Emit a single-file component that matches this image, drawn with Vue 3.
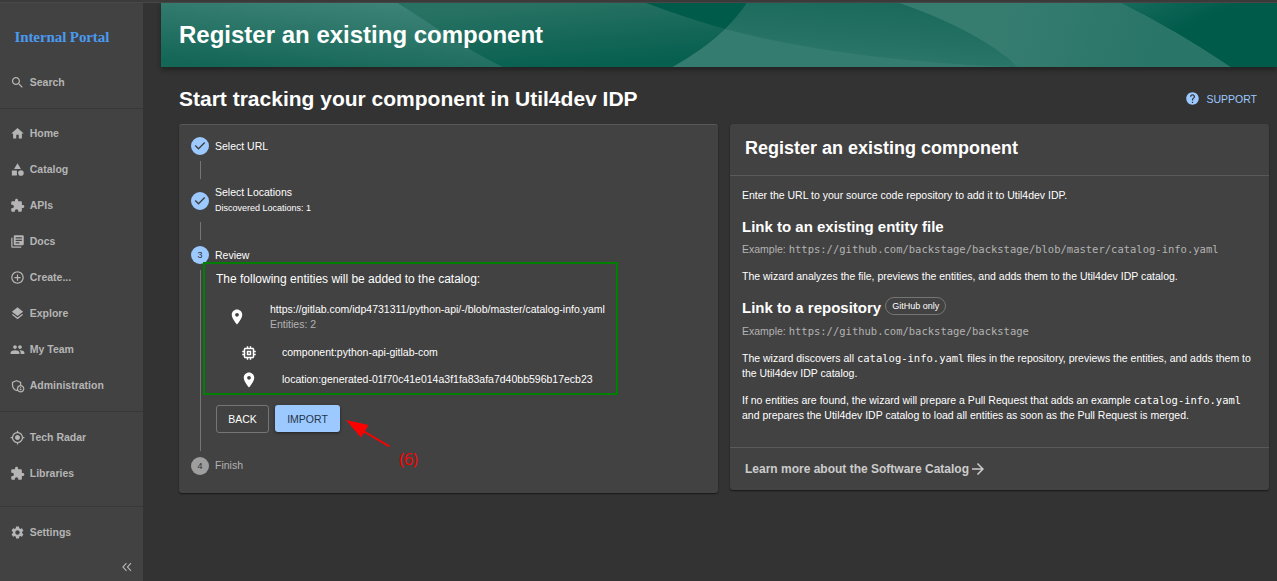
<script setup>
const icons = {
  search: 'M15.5 14h-.79l-.28-.27C15.41 12.59 16 11.11 16 9.5 16 5.91 13.09 3 9.5 3S3 5.91 3 9.5 5.91 16 9.5 16c1.61 0 3.09-.59 4.23-1.57l.27.28v.79l5 4.99L20.49 19l-4.99-5zm-6 0C7.01 14 5 11.99 5 9.5S7.01 5 9.5 5 14 7.01 14 9.5 11.99 14 9.5 14z',
  home: 'M10 20v-6h4v6h5v-8h3L12 3 2 12h3v8z',
  catalog: 'M12 2l-5.5 9h11zM17.5 13a4.5 4.5 0 1 0 0 9 4.5 4.5 0 0 0 0-9zM3 13.5h8v8H3z',
  extension: 'M20.5 11H19V7c0-1.1-.9-2-2-2h-4V3.5C13 2.12 11.88 1 10.5 1S8 2.12 8 3.5V5H4c-1.1 0-1.99.9-1.99 2v3.8H3.5c1.49 0 2.7 1.21 2.7 2.7s-1.21 2.7-2.7 2.7H2V20c0 1.1.9 2 2 2h3.8v-1.5c0-1.49 1.21-2.7 2.7-2.7 1.49 0 2.7 1.21 2.7 2.7V22H17c1.1 0 2-.9 2-2v-4h1.5c1.38 0 2.5-1.12 2.5-2.5S21.88 11 20.5 11z',
  docs: 'M4 6H2v14c0 1.1.9 2 2 2h14v-2H4V6zm16-4H8c-1.1 0-2 .9-2 2v12c0 1.1.9 2 2 2h12c1.1 0 2-.9 2-2V4c0-1.1-.9-2-2-2zm-1 9H9V9h10v2zm-4 4H9v-2h6v2zm4-8H9V5h10v2z',
  create: 'M13 7h-2v4H7v2h4v4h2v-4h4v-2h-4V7zm-1-5C6.48 2 2 6.48 2 12s4.48 10 10 10 10-4.48 10-10S17.52 2 12 2zm0 18c-4.41 0-8-3.59-8-8s3.59-8 8-8 8 3.59 8 8-3.59 8-8 8z',
  layers: 'M11.99 18.54l-7.37-5.73L3 14.07l9 7 9-7-1.63-1.27-7.38 5.74zM12 16l7.36-5.73L21 9l-9-7-9 7 1.63 1.27L12 16z',
  people: 'M16 11c1.66 0 2.99-1.34 2.99-3S17.66 5 16 5c-1.66 0-3 1.34-3 3s1.34 3 3 3zm-8 0c1.66 0 2.99-1.34 2.99-3S9.66 5 8 5C6.34 5 5 6.34 5 8s1.34 3 3 3zm0 2c-2.33 0-7 1.17-7 3.5V19h14v-2.5c0-2.33-4.67-3.5-7-3.5zm8 0c-.29 0-.62.02-.97.05 1.16.84 1.97 1.97 1.97 3.45V19h6v-2.5c0-2.33-4.67-3.5-7-3.5z',
  admin: 'M18 11.09V6.27L10.5 3 3 6.27v4.91c0 4.54 3.2 8.79 7.5 9.82.55-.13 1.08-.32 1.6-.55C13.18 21.99 14.97 23 17 23c3.31 0 6-2.69 6-6 0-2.97-2.16-5.43-5-5.91zM11 17c0 .56.08 1.11.23 1.62-.24.11-.48.22-.73.3-3.17-1-5.5-4.24-5.5-7.74v-3.6l5.5-2.4 5.5 2.4v3.51c-2.84.48-5 2.94-5 5.91zm6 4c-2.21 0-4-1.79-4-4s1.79-4 4-4 4 1.79 4 4-1.79 4-4 4zM17 14.38a1.12 1.12 0 1 0 0 2.24 1.12 1.12 0 0 0 0-2.24zM17 17.5c-.73 0-2.19.36-2.24 1.08.5.71 1.32 1.17 2.24 1.17s1.74-.46 2.24-1.17c-.05-.72-1.51-1.08-2.24-1.08z',
  radar: 'M12 8c-2.21 0-4 1.79-4 4s1.79 4 4 4 4-1.79 4-4-1.79-4-4-4zm8.94 3c-.46-4.17-3.77-7.48-7.94-7.94V1h-2v2.06C6.83 3.52 3.52 6.83 3.06 11H1v2h2.06c.46 4.17 3.77 7.48 7.94 7.94V23h2v-2.06c4.17-.46 7.48-3.77 7.94-7.94H23v-2h-2.06zM12 19c-3.87 0-7-3.13-7-7s3.13-7 7-7 7 3.13 7 7-3.13 7-7 7z',
  settings: 'M19.14 12.94c.04-.3.06-.61.06-.94 0-.32-.02-.64-.07-.94l2.03-1.58c.18-.14.23-.41.12-.61l-1.92-3.32c-.12-.22-.37-.29-.59-.22l-2.39.96c-.5-.38-1.03-.7-1.62-.94l-.36-2.54c-.04-.24-.24-.41-.48-.41h-3.84c-.24 0-.43.17-.47.41l-.36 2.54c-.59.24-1.13.57-1.62.94l-2.39-.96c-.22-.08-.47 0-.59.22L2.74 8.87c-.12.21-.08.47.12.61l2.03 1.58c-.05.3-.09.63-.09.94s.02.64.07.94l-2.03 1.58c-.18.14-.23.41-.12.61l1.92 3.32c.12.22.37.29.59.22l2.39-.96c.5.38 1.03.7 1.62.94l.36 2.54c.05.24.24.41.48.41h3.84c.24 0 .44-.17.47-.41l.36-2.54c.59-.24 1.13-.56 1.62-.94l2.39.96c.22.08.47 0 .59-.22l1.92-3.32c.12-.22.07-.47-.12-.61l-2.01-1.58zM12 15.6c-1.98 0-3.6-1.62-3.6-3.6s1.62-3.6 3.6-3.6 3.6 1.62 3.6 3.6-1.62 3.6-3.6 3.6z',
  pin: 'M12 2C8.13 2 5 5.13 5 9c0 5.25 7 13 7 13s7-7.75 7-13c0-3.87-3.13-7-7-7zm0 9.5c-1.38 0-2.5-1.12-2.5-2.5s1.12-2.5 2.5-2.5 2.5 1.12 2.5 2.5-1.12 2.5-2.5 2.5z',
  memory: 'M15 9H9v6h6V9zm-2 4h-2v-2h2v2zm8-2V9h-2V7c0-1.1-.9-2-2-2h-2V3h-2v2h-2V3H9v2H7c-1.1 0-2 .9-2 2v2H3v2h2v2H3v2h2v2c0 1.1.9 2 2 2h2v2h2v-2h2v2h2v-2h2c1.1 0 2-.9 2-2v-2h2v-2h-2v-2h2zm-4 6H7V7h10v10z',
  help: 'M12 2C6.48 2 2 6.48 2 12s4.48 10 10 10 10-4.48 10-10S17.52 2 12 2zm1 17h-2v-2h2v2zm2.07-7.75l-.9.92C13.45 12.9 13 13.5 13 15h-2v-.5c0-1.1.45-2.1 1.17-2.83l1.24-1.26c.37-.36.59-.86.59-1.41 0-1.1-.9-2-2-2s-2 .9-2 2H8c0-2.21 1.79-4 4-4s4 1.79 4 4c0 .88-.36 1.68-.93 2.25z',
  arrow: 'M12 4l-1.41 1.41L16.17 11H4v2h12.17l-5.58 5.59L12 20l8-8z',
  done: 'M12 0a12 12 0 1 0 0 24 12 12 0 0 0 0-24zm-2 17l-5-5 1.4-1.4 3.6 3.6 7.6-7.6L19 8l-9 9z',
}
const groups = [
  [['search', 'Search']],
  [
    ['home', 'Home'], ['catalog', 'Catalog'], ['extension', 'APIs'], ['docs', 'Docs'],
    ['create', 'Create...'], ['layers', 'Explore'], ['people', 'My Team'], ['admin', 'Administration'],
  ],
  [['radar', 'Tech Radar'], ['extension', 'Libraries']],
  [['settings', 'Settings']],
]
</script>

<template>
  <div class="app">
    <div class="strip"></div>
    <div class="body">
      <nav class="sidebar">
        <div class="logo">Internal Portal</div>
        <div v-for="(group, g) in groups" :key="g" :class="['group', 'group-' + g]">
          <a v-for="item in group" :key="item[1]" class="nav-item">
            <svg viewBox="0 0 24 24"><path fill-rule="evenodd" :d="icons[item[0]]" /></svg>
            <span>{{ item[1] }}</span>
          </a>
        </div>
        <div class="collapse">
          <svg viewBox="0 0 10 10"><path d="M4.500 1.200.9 5l3.600 3.800M9 1.200 5.400 5 9 8.800" /></svg>
        </div>
      </nav>

      <main>
        <header>
          <svg class="waves" viewBox="161 3 1116 64" preserveAspectRatio="none">
            <defs>
              <linearGradient id="ga" gradientUnits="userSpaceOnUse" x1="330" y1="0" x2="323" y2="75"><stop offset="0" stop-color="#3c8276" /><stop offset="1" stop-color="#146656" /></linearGradient>
              <linearGradient id="gb" gradientUnits="userSpaceOnUse" x1="560" y1="0" x2="566" y2="70"><stop offset="0" stop-color="#287263" /><stop offset="1" stop-color="#065f4f" /></linearGradient>
              <linearGradient id="gc" gradientUnits="userSpaceOnUse" x1="850" y1="3" x2="845" y2="67"><stop offset="0" stop-color="#1b6a5b" /><stop offset="1" stop-color="#2d786a" /></linearGradient>
              <linearGradient id="gd" gradientUnits="userSpaceOnUse" x1="1000" y1="20" x2="1150" y2="60"><stop offset="0" stop-color="#367d70" /><stop offset="1" stop-color="#297567" /></linearGradient>
              <linearGradient id="ge" gradientUnits="userSpaceOnUse" x1="1150" y1="-6" x2="1170" y2="36"><stop offset="0" stop-color="#15695a" /><stop offset="1" stop-color="#005b4b" /></linearGradient>
            </defs>
            <path fill="#005b4b" d="M161 3h1116v64H161z" />
            <path fill="url(#gb)" d="M380 3H646Q686 18 725 29L690 67H380z" />
            <path fill="url(#ga)" d="M161 3H397.500Q426 21 450 37T503 67H161z" />
            <path fill="#347c6f" d="M672.500 67Q706 48 725 29L900 40 1040 67z" />
            <path fill="url(#gc)" d="M725 29Q740 14 746.500 3H899Q977 30 1018 67H1010Q840 60 725 29z" />
            <path fill="url(#gd)" d="M899 3H1122Q1176 30 1231 67H1018Q977 30 899 3z" />
            <path fill="url(#ge)" d="M1122 3H1277V67H1231Q1176 30 1122 3z" />
          </svg>
          <h1>Register an existing component</h1>
        </header>

        <section class="content">
          <div class="title-row">
            <h2>Start tracking your component in Util4dev IDP</h2>
            <a class="support">
              <svg viewBox="0 0 24 24"><path :d="icons.help" /></svg>
              <span>SUPPORT</span>
            </a>
          </div>

          <div class="columns">
            <div class="card wizard">
              <div class="step">
                <svg class="badge" viewBox="0 0 24 24"><path :d="icons.done" /></svg>
                <span>Select URL</span>
              </div>
              <div class="connector"></div>
              <div class="step tall">
                <svg class="badge" viewBox="0 0 24 24"><path :d="icons.done" /></svg>
                <div><div>Select Locations</div><div class="caption">Discovered Locations: 1</div></div>
              </div>
              <div class="connector second"></div>
              <div class="step">
                <span class="badge number">3</span>
                <span>Review</span>
              </div>
              <div class="review">
                <div class="intro">The following entities will be added to the catalog:</div>
                <div class="entity parent">
                  <svg viewBox="0 0 24 24"><path :d="icons.pin" /></svg>
                  <div>
                    <div class="url">https://gitlab.com/idp4731311/python-api/-/blob/master/catalog-info.yaml</div>
                    <div class="muted">Entities: 2</div>
                  </div>
                </div>
                <div class="entity child">
                  <svg viewBox="0 0 24 24"><path :d="icons.memory" /></svg>
                  <span>component:python-api-gitlab-com</span>
                </div>
                <div class="entity child">
                  <svg viewBox="0 0 24 24"><path :d="icons.pin" /></svg>
                  <span>location:generated-01f70c41e014a3f1fa83afa7d40bb596b17ecb23</span>
                </div>
                <div class="buttons">
                  <button class="back">BACK</button>
                  <button class="import">IMPORT</button>
                </div>
              </div>
              <div class="step finish">
                <span class="badge number">4</span>
                <span class="finish-label">Finish</span>
              </div>

              <div class="highlight"></div>
              <svg class="pointer" viewBox="0 0 46 28"><path class="shaft" d="M43.500 26.500 18 11.500" /><path d="M0 0 22.500 5 15 17.500z" /></svg>
              <span class="note">(6)</span>
            </div>

            <div class="card info">
              <h3>Register an existing component</h3>
              <div class="info-body">
                <p>Enter the URL to your source code repository to add it to Util4dev IDP.</p>
                <h4>Link to an existing entity file</h4>
                <p class="muted example">Example: <code>https://github.com/backstage/backstage/blob/master/catalog-info.yaml</code></p>
                <p>The wizard analyzes the file, previews the entities, and adds them to the Util4dev IDP catalog.</p>
                <h4 class="with-chip">Link to a repository <span class="chip">GitHub only</span></h4>
                <p class="muted example">Example: <code>https://github.com/backstage/backstage</code></p>
                <p>The wizard discovers all <code>catalog-info.yaml</code> files in the repository, previews the entities, and adds them to<br />the Util4dev IDP catalog.</p>
                <p>If no entities are found, the wizard will prepare a Pull Request that adds an example <code>catalog-info.yaml</code><br />and prepares the Util4dev IDP catalog to load all entities as soon as the Pull Request is merged.</p>
              </div>
              <a class="more">
                <span>Learn more about the Software Catalog</span>
                <svg viewBox="0 0 24 24"><path :d="icons.arrow" /></svg>
              </a>
            </div>
          </div>
        </section>
      </main>
    </div>
  </div>
</template>

<style>
body { background: #333; overflow: hidden; }
</style>

<style scoped>
* { box-sizing: border-box; }
svg { display: block; fill: currentColor; flex: none; }
h1, h2, h3, h4, p { margin: 0; }
.app {
  width: 1277px; height: 581px; overflow: hidden; display: flex; flex-direction: column;
  background: #333; color: #fff; font: 10.5px/15px "Liberation Sans", Arial, sans-serif;
}
.strip { height: 3px; flex: none; background: #3c3b3b; border-bottom: 1px solid #4a4747; }
.body { display: flex; flex: 1; min-height: 0; }

.sidebar { width: 143px; flex: none; background: #424242; color: #b5b5b5; display: flex; flex-direction: column; }
.logo { height: 61px; padding: 24px 0 0 14.5px; font: bold 15px/20px "Liberation Serif", serif; letter-spacing: -.1px; color: #4a9af0; }
.group { flex: none; }
.group-0 { height: 45px; border-bottom: 1px solid #383838; }
.group-1 { height: 303px; padding-top: 6px; border-bottom: 1px solid #383838; }
.group-2 { height: 95px; padding-top: 7px; border-bottom: 1px solid #383838; }
.group-3 { padding-top: 7px; }
.nav-item { display: flex; align-items: center; height: 36px; padding-left: 10px; gap: 4.75px; font-weight: bold; }
.nav-item svg { width: 15px; height: 15px; }
.collapse { padding: 12px 0 0 122px; }
.collapse svg { width: 10px; height: 10px; fill: none; stroke: currentColor; stroke-width: 1.1; }

main { flex: 1; margin-left: 18px; display: flex; flex-direction: column; min-width: 0; }
header { position: relative; height: 64px; flex: none; display: flex; align-items: center; padding-left: 18px; box-shadow: 0 3px 5px rgba(0, 0, 0, .35); }
.waves { position: absolute; inset: 0; width: 100%; height: 100%; }
h1 { position: relative; font-size: 24px; line-height: 28px; }
.content { padding: 0 8px 0 18px; }
.title-row { display: flex; justify-content: space-between; height: 57px; padding: 18px 12px 0 0; }
h2 { font-size: 21px; line-height: 28px; }
.support { display: flex; align-items: center; height: 28px; gap: 6px; color: #9cc9ff; }
.support svg { width: 15px; height: 15px; margin-top: -1px; }
.columns { display: grid; grid-template-columns: 539px 539px; gap: 12px; align-items: start; }
.card { background: #424242; border-radius: 3px; box-shadow: 0 1px 2px rgba(0, 0, 0, .4), 0 1px 1px rgba(0, 0, 0, .2); }

.wizard { position: relative; height: 369px; padding: 12px 12px 0; border-top: 1px solid #585858; }
.step { display: flex; align-items: center; gap: 6px; height: 18px; }
.step.tall { height: 43px; }
.badge { width: 18px; height: 18px; flex: none; color: #9cc9ff; }
.number { display: flex; align-items: center; justify-content: center; border-radius: 50%; background: #9cc9ff; color: #303030; font-size: 9px; }
.caption { font-size: 9px; line-height: 15px; padding-top: 1px; }
.connector { width: 1px; height: 18px; margin: 6px 0 0 9px; background: #757575; }
.connector.second { margin: 0 0 6px 9px; }
.review { height: 181px; margin: 6px 0 6px 9px; padding-left: 15px; border-left: 1px solid #757575; }
.intro { font-size: 12px; line-height: 18px; }
.entity { display: flex; align-items: center; }
.entity svg { width: 18px; height: 18px; }
.entity.parent { height: 44px; margin-top: 7px; padding-left: 12px; gap: 24px; }
.entity.child { height: 27px; padding-left: 24px; gap: 24px; }
.muted { color: #b3b3b3; }
.buttons { display: flex; gap: 6px; margin-top: 12px; }
button { height: 28px; padding: 0; border-radius: 3px; font: 10.5px/18px "Liberation Sans", Arial, sans-serif; }
.back { width: 53px; color: #fff; background: none; border: 1px solid #757575; }
.import { width: 65px; height: 27px; color: #26364a; background: #9cc9ff; border: 0; box-shadow: 0 1px 3px rgba(0, 0, 0, .5); }
.finish { color: #b3b3b3; }
.finish-label { padding-bottom: 1px; }
.finish .number { background: #9e9e9e; }
.highlight { position: absolute; left: 24px; top: 137px; width: 415px; height: 133px; border: 2px solid #008000; }
.pointer { position: absolute; left: 167px; top: 295px; width: 46px; height: 28px; color: #f00; }
.shaft { fill: none; stroke: currentColor; stroke-width: 2; }
.note { position: absolute; left: 220.25px; top: 323px; font: 17px/22px "Open Sans", sans-serif; letter-spacing: -.6px; color: #f00; }

.info { height: 366px; }
h3 { height: 52px; padding: 12px 15px 0; font-size: 18px; line-height: 24px; border-bottom: 1px solid #5a5a5a; }
.info-body { height: 272px; padding: 12px; border-bottom: 1px solid #5a5a5a; white-space: nowrap; }
.info-body p { margin-bottom: 12px; }
h4 { font-size: 15px; line-height: 20px; margin-bottom: 5px; padding-top: 2px; }
code { font-family: "DejaVu Sans Mono", monospace; font-size: 10.5px; line-height: 1; }
.info-body .with-chip { display: flex; align-items: center; gap: 4px; padding-top: 0; margin: 14px 0 6px; }
.chip { height: 18px; padding: 0 6px; border: 1px solid #757575; border-radius: 9px; font-size: 9px; line-height: 16px; font-weight: normal; margin-top: -4px; }
.more { display: flex; align-items: center; height: 42px; padding-left: 15px; color: #ccc; font-weight: bold; font-size: 12px; }
.more svg { width: 18px; height: 18px; }
</style>
